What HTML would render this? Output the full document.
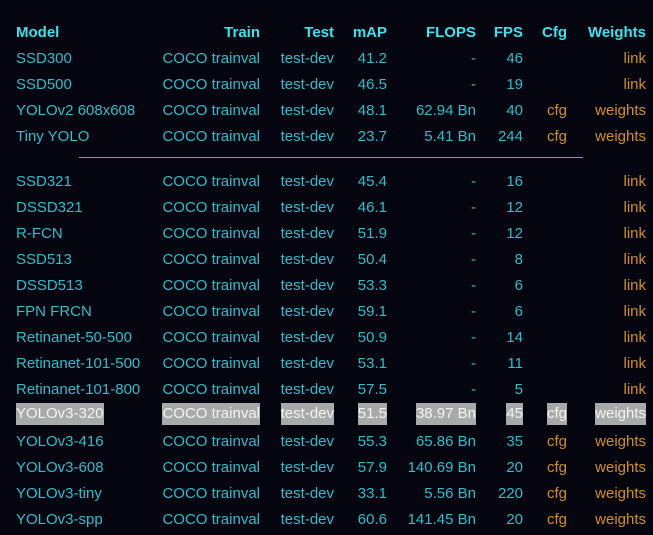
<!DOCTYPE html>
<html><head><meta charset="utf-8"><style>
html,body{margin:0;padding:0;background:#05050f;width:653px;height:535px;overflow:hidden;}
body{font-family:"Liberation Sans",sans-serif;font-size:15px;color:#2bbfce;position:relative;}
.r{position:absolute;left:0;width:653px;height:20px;line-height:20px;}
.r span{position:absolute;top:0;white-space:nowrap;}
.a{left:16px}.b{right:393px}.c{right:319px}.d{right:266px}.e{right:177px}.f{right:130px}.g{right:86px}.h{right:7px}
.o{color:#d4901c}
.hd{color:#38e4ee;font-weight:bold;}
.hl span{background:#a9a9a9;color:#f4f4f4;}
.line{position:absolute;left:79px;top:157px;width:504px;height:1px;background:#2bbfce;}
</style></head><body>
<div class="r hd" style="top:23px"><span class="a">Model</span><span class="b">Train</span><span class="c">Test</span><span class="d">mAP</span><span class="e">FLOPS</span><span class="f">FPS</span><span class="g">Cfg</span><span class="h">Weights</span></div>
<div class="r" style="top:49px"><span class="a">SSD300</span><span class="b">COCO trainval</span><span class="c">test-dev</span><span class="d">41.2</span><span class="e">-</span><span class="f">46</span><span class="h o">link</span></div>
<div class="r" style="top:75px"><span class="a">SSD500</span><span class="b">COCO trainval</span><span class="c">test-dev</span><span class="d">46.5</span><span class="e">-</span><span class="f">19</span><span class="h o">link</span></div>
<div class="r" style="top:101px"><span class="a">YOLOv2 608x608</span><span class="b">COCO trainval</span><span class="c">test-dev</span><span class="d">48.1</span><span class="e">62.94 Bn</span><span class="f">40</span><span class="g o">cfg</span><span class="h o">weights</span></div>
<div class="r" style="top:127px"><span class="a">Tiny YOLO</span><span class="b">COCO trainval</span><span class="c">test-dev</span><span class="d">23.7</span><span class="e">5.41 Bn</span><span class="f">244</span><span class="g o">cfg</span><span class="h o">weights</span></div>
<div class="line"></div>
<div class="r" style="top:172px"><span class="a">SSD321</span><span class="b">COCO trainval</span><span class="c">test-dev</span><span class="d">45.4</span><span class="e">-</span><span class="f">16</span><span class="h o">link</span></div>
<div class="r" style="top:198px"><span class="a">DSSD321</span><span class="b">COCO trainval</span><span class="c">test-dev</span><span class="d">46.1</span><span class="e">-</span><span class="f">12</span><span class="h o">link</span></div>
<div class="r" style="top:224px"><span class="a">R-FCN</span><span class="b">COCO trainval</span><span class="c">test-dev</span><span class="d">51.9</span><span class="e">-</span><span class="f">12</span><span class="h o">link</span></div>
<div class="r" style="top:250px"><span class="a">SSD513</span><span class="b">COCO trainval</span><span class="c">test-dev</span><span class="d">50.4</span><span class="e">-</span><span class="f">8</span><span class="h o">link</span></div>
<div class="r" style="top:276px"><span class="a">DSSD513</span><span class="b">COCO trainval</span><span class="c">test-dev</span><span class="d">53.3</span><span class="e">-</span><span class="f">6</span><span class="h o">link</span></div>
<div class="r" style="top:302px"><span class="a">FPN FRCN</span><span class="b">COCO trainval</span><span class="c">test-dev</span><span class="d">59.1</span><span class="e">-</span><span class="f">6</span><span class="h o">link</span></div>
<div class="r" style="top:328px"><span class="a">Retinanet-50-500</span><span class="b">COCO trainval</span><span class="c">test-dev</span><span class="d">50.9</span><span class="e">-</span><span class="f">14</span><span class="h o">link</span></div>
<div class="r" style="top:354px"><span class="a">Retinanet-101-500</span><span class="b">COCO trainval</span><span class="c">test-dev</span><span class="d">53.1</span><span class="e">-</span><span class="f">11</span><span class="h o">link</span></div>
<div class="r" style="top:380px"><span class="a">Retinanet-101-800</span><span class="b">COCO trainval</span><span class="c">test-dev</span><span class="d">57.5</span><span class="e">-</span><span class="f">5</span><span class="h o">link</span></div>
<div class="r hl" style="top:403px;height:22px;line-height:22px"><span class="a">YOLOv3-320</span><span class="b">COCO trainval</span><span class="c">test-dev</span><span class="d">51.5</span><span class="e">38.97 Bn</span><span class="f">45</span><span class="g">cfg</span><span class="h">weights</span></div>
<div class="r" style="top:432px"><span class="a">YOLOv3-416</span><span class="b">COCO trainval</span><span class="c">test-dev</span><span class="d">55.3</span><span class="e">65.86 Bn</span><span class="f">35</span><span class="g o">cfg</span><span class="h o">weights</span></div>
<div class="r" style="top:458px"><span class="a">YOLOv3-608</span><span class="b">COCO trainval</span><span class="c">test-dev</span><span class="d">57.9</span><span class="e">140.69 Bn</span><span class="f">20</span><span class="g o">cfg</span><span class="h o">weights</span></div>
<div class="r" style="top:484px"><span class="a">YOLOv3-tiny</span><span class="b">COCO trainval</span><span class="c">test-dev</span><span class="d">33.1</span><span class="e">5.56 Bn</span><span class="f">220</span><span class="g o">cfg</span><span class="h o">weights</span></div>
<div class="r" style="top:510px"><span class="a">YOLOv3-spp</span><span class="b">COCO trainval</span><span class="c">test-dev</span><span class="d">60.6</span><span class="e">141.45 Bn</span><span class="f">20</span><span class="g o">cfg</span><span class="h o">weights</span></div>
</body></html>
